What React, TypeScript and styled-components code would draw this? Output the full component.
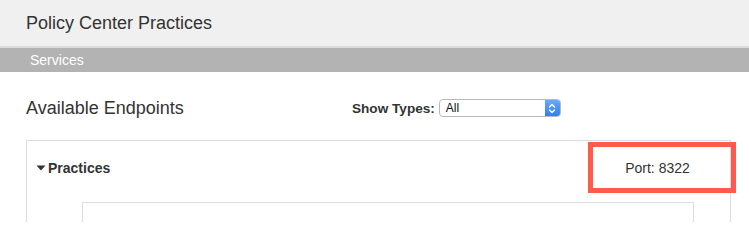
import React from 'react';
import styled, { createGlobalStyle } from 'styled-components';

const GlobalStyle = createGlobalStyle`
  html, body {
    margin: 0;
    padding: 0;
    background: #ffffff;
    font-family: "Liberation Sans", Arial, Helvetica, sans-serif;
    color: #333333;
  }
`;

const Page = styled.div`
  width: 749px;
  height: 222px;
  overflow: hidden;
`;

const Header = styled.header`
  height: 46px;
  padding-left: 26px;
  display: flex;
  align-items: center;
  background: #f0f0f0;
  border-bottom: 2px solid #dcdcdc;
  font-size: 18px;
  color: #333333;
`;

const NavBar = styled.nav`
  height: 24px;
  padding-left: 30px;
  display: flex;
  align-items: center;
  background: #b3b3b3;
  color: #ffffff;
  font-size: 14px;
`;

const Content = styled.main`
  padding: 24px 18px 0 26px;
`;

const Toolbar = styled.div`
  height: 24px;
  display: flex;
  align-items: center;
  margin-bottom: 20px;
`;

const SectionTitle = styled.h2`
  flex: 0 0 326px;
  margin: 0;
  font-size: 18px;
  font-weight: normal;
  color: #333333;
`;

const FilterLabel = styled.label`
  font-size: 13.6px;
  font-weight: bold;
  color: #333333;
`;

const SelectBox = styled.div`
  margin-left: 4px;
  width: 122px;
  height: 18px;
  box-sizing: border-box;
  display: flex;
  align-items: stretch;
  border: 1px solid #b9b9b9;
  border-radius: 4px;
  background: #ffffff;
  overflow: hidden;
`;

const SelectValue = styled.span`
  flex: 1;
  padding-left: 6px;
  font-size: 12px;
  line-height: 16px;
  color: #111111;
`;

const Stepper = styled.span`
  width: 15px;
  display: flex;
  align-items: center;
  justify-content: center;
  background: linear-gradient(#6aa9f8, #2f7ff2);
`;

const Panel = styled.section`
  border: 1px solid #dddddd;
  border-bottom: none;
`;

const PanelHeader = styled.div`
  display: flex;
  align-items: center;
  justify-content: space-between;
  padding: 1px 0 0 9px;
`;

const PanelTitle = styled.div`
  display: flex;
  align-items: center;
  gap: 2px;
  font-size: 14px;
  font-weight: bold;
  color: #333333;
`;

const PortBox = styled.div`
  width: 148px;
  height: 51px;
  box-sizing: border-box;
  margin-right: -6px;
  padding-right: 9px;
  display: flex;
  align-items: center;
  justify-content: center;
  border: 5px solid #ff5a4e;
  font-size: 14px;
  color: #333333;
`;

const InnerBox = styled.div`
  margin: 9px 36px 0 55px;
  height: 40px;
  border: 1px solid #dddddd;
  border-bottom: none;
`;

export default function App() {
  return (
    <Page>
      <GlobalStyle />
      <Header>Policy Center Practices</Header>
      <NavBar>Services</NavBar>
      <Content>
        <Toolbar>
          <SectionTitle>Available Endpoints</SectionTitle>
          <FilterLabel>Show Types:</FilterLabel>
          <SelectBox>
            <SelectValue>All</SelectValue>
            <Stepper>
              <svg width="8" height="11" viewBox="0 0 8 11" fill="none" stroke="#ffffff" strokeWidth="1.4" strokeLinecap="round" strokeLinejoin="round">
                <path d="M1.5 4 L4 1.5 L6.5 4" />
                <path d="M1.5 7 L4 9.5 L6.5 7" />
              </svg>
            </Stepper>
          </SelectBox>
        </Toolbar>
        <Panel>
          <PanelHeader>
            <PanelTitle>
              <svg width="10" height="6" viewBox="0 0 10 6">
                <path d="M0.5 0.5 H9.5 L5 5.5 Z" fill="#333333" />
              </svg>
              Practices
            </PanelTitle>
            <PortBox>Port: 8322</PortBox>
          </PanelHeader>
          <InnerBox />
        </Panel>
      </Content>
    </Page>
  );
}
